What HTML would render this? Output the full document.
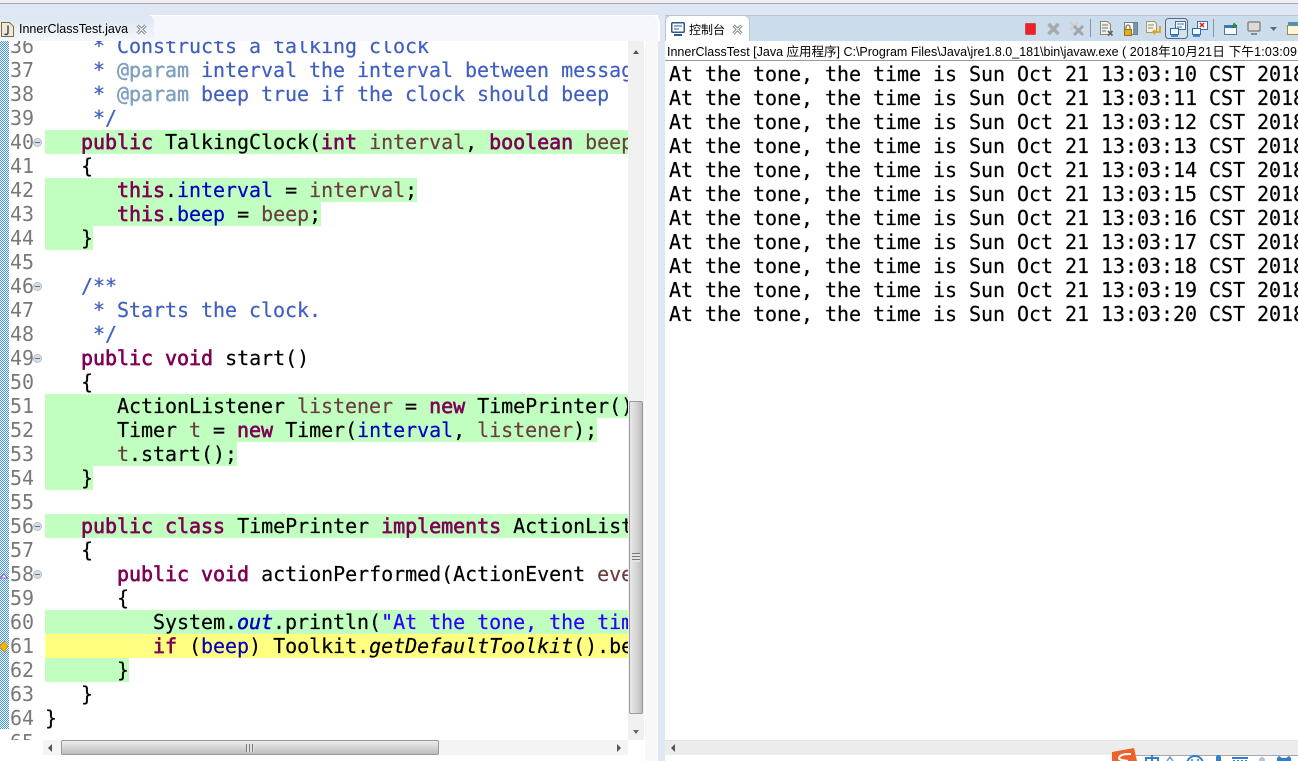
<!DOCTYPE html>
<html><head><meta charset="utf-8">
<style>
*{box-sizing:border-box}
html,body{margin:0;padding:0}
body{width:1298px;height:761px;overflow:hidden;background:#fff;position:relative;font-family:"Liberation Sans","Noto Sans CJK SC",sans-serif}
.a{position:absolute}
#code,#con{font:20px/24px "DejaVu Sans Mono","Liberation Mono",monospace;letter-spacing:-.04px;overflow:hidden;-webkit-text-stroke:.2px}
#code{left:45px;top:41px;width:583px;height:699px;color:#000;white-space:pre}
#code div{position:absolute;left:0;height:24px}
#code div.g{background:#c0ffc0}
#code div.y{background:#ffff80}
#con{left:669px;top:62px;width:629px;height:678px;color:#000}
#con div{height:24px;white-space:pre}
#nums{left:10px;top:41px;width:32px;height:699px;overflow:hidden;font:20px/24px "DejaVu Sans Mono",monospace;letter-spacing:-.04px;color:#787878;white-space:pre}
#nums div{position:absolute;left:0;height:24px}
b{color:#7f0055;font-weight:normal;-webkit-text-stroke:.65px #7f0055}
i.c{color:#3f5fbf;font-style:normal}
i.t{color:#7f9fbf;font-style:normal;-webkit-text-stroke:.4px #7f9fbf}
i.v{color:#6a3e3e;font-style:normal}
i.f{color:#0000c0;font-style:normal}
i.s{color:#2a00ff;font-style:normal}
i.o{color:#0000c0;font-style:italic;-webkit-text-stroke:.5px #0000c0}
.fold{position:absolute;left:33px;width:9px;height:9px;border-radius:50%;background:#d6dfe8;border:1px solid #b4c0cc}
.fold:after{content:"";position:absolute;left:1px;top:3px;width:5px;height:1px;background:#5f7388}
</style></head><body>
<!-- top -->
<div class="a" style="left:0;top:0;width:1298px;height:3px;background:#f0f0f0"></div>
<div class="a" style="left:0;top:3px;width:1298px;height:1px;background:#a8a8a8"></div>
<div class="a" style="left:0;top:4px;width:1298px;height:11px;background:#dfe6f4"></div>
<div class="a" style="left:645px;top:41px;width:15px;height:720px;background:#f8f8f8"></div>
<div class="a" style="left:658px;top:15px;width:7px;height:746px;background:#dfe6f4"></div>

<!-- editor tab -->
<div class="a" style="left:0;top:15px;width:660px;height:26px;background:#f5f7fc;border-top:1px solid #fff;border-right:2px solid #fff;border-top-right-radius:8px"></div>
<div class="a" style="left:0;top:15px;width:154px;height:26px;background:linear-gradient(#dbe5f2,#f4f7fb);border-top-right-radius:7px"></div>
<svg class="a" style="left:1px;top:22px" width="13" height="15" viewBox="0 0 13 15"><path d="M.5.5h8l4 4v10H.5z" fill="#f3e9cf" stroke="#7d6c4a"/><path d="M7 3.500v7c0 2-2 2.500-3.500 1.500" fill="none" stroke="#2c4a86" stroke-width="1.500"/></svg>
<div class="a" style="left:19px;top:22px;font-size:12.500px;line-height:15px;color:#000;white-space:pre">InnerClassTest.java</div>
<svg class="a" style="left:136px;top:24px" width="11" height="11" viewBox="0 0 11 11"><path d="M1.500 1.500l8 8M9.500 1.500l-8 8" stroke="#777" stroke-width="3"/><path d="M1.500 1.500l8 8M9.500 1.500l-8 8" stroke="#fff" stroke-width="1.200"/></svg>

<!-- left strip -->
<div class="a" style="left:0;top:41px;width:9px;height:688px;background:conic-gradient(#3f97f5 25%,#fff 0 50%,#3f97f5 0 75%,#fff 0) 0 0/2px 2px"></div>
<svg class="a" style="left:0;top:568px" width="8" height="12" viewBox="0 0 8 12"><path d="M.5 10L4 6l3.500 4z" fill="#fff" stroke="#8a5fc0"/></svg>
<svg class="a" style="left:0;top:640px" width="9" height="13" viewBox="0 0 9 13"><path d="M4 1l4 5.500L4 12 0 6.500z" fill="#f5b800" stroke="#c98a00" stroke-width=".7"/></svg>

<!-- line numbers -->
<div id="nums" class="a">
<div style="top:-7px">36</div><div style="top:17px">37</div><div style="top:41px">38</div><div style="top:65px">39</div><div style="top:89px">40</div><div style="top:113px">41</div><div style="top:137px">42</div><div style="top:161px">43</div><div style="top:185px">44</div><div style="top:209px">45</div><div style="top:233px">46</div><div style="top:257px">47</div><div style="top:281px">48</div><div style="top:305px">49</div><div style="top:329px">50</div><div style="top:353px">51</div><div style="top:377px">52</div><div style="top:401px">53</div><div style="top:425px">54</div><div style="top:449px">55</div><div style="top:473px">56</div><div style="top:497px">57</div><div style="top:521px">58</div><div style="top:545px">59</div><div style="top:569px">60</div><div style="top:593px">61</div><div style="top:617px">62</div><div style="top:641px">63</div><div style="top:665px">64</div><div style="top:689px">65</div>
</div>
<div class="fold" style="top:138px"></div>
<div class="fold" style="top:282px"></div>
<div class="fold" style="top:354px"></div>
<div class="fold" style="top:522px"></div>
<div class="fold" style="top:570px"></div>

<!-- code -->
<div id="code" class="a">
<div style="top:-7px"><i class="c">    * Constructs a talking clock</i></div>
<div style="top:17px"><i class="c">    * </i><i class="t">@param</i><i class="c"> interval the interval between messages</i></div>
<div style="top:41px"><i class="c">    * </i><i class="t">@param</i><i class="c"> beep true if the clock should beep</i></div>
<div style="top:65px"><i class="c">    */</i></div>
<div class="g" style="top:89px;width:583px">   <b>public</b> TalkingClock(<b>int</b> <i class="v">interval</i>, <b>boolean</b> <i class="v">beep</i>)</div>
<div style="top:113px">   {</div>
<div class="g" style="top:137px;width:372px">      <b>this</b>.<i class="f">interval</i> = <i class="v">interval</i>;</div>
<div class="g" style="top:161px;width:276px">      <b>this</b>.<i class="f">beep</i> = <i class="v">beep</i>;</div>
<div class="g" style="top:185px;width:48px">   }</div>
<div style="top:233px"><i class="c">   /**</i></div>
<div style="top:257px"><i class="c">    * Starts the clock.</i></div>
<div style="top:281px"><i class="c">    */</i></div>
<div style="top:305px">   <b>public</b> <b>void</b> start()</div>
<div style="top:329px">   {</div>
<div class="g" style="top:353px;width:583px">      ActionListener <i class="v">listener</i> = <b>new</b> TimePrinter();</div>
<div class="g" style="top:377px;width:552px">      Timer <i class="v">t</i> = <b>new</b> Timer(<i class="f">interval</i>, <i class="v">listener</i>);</div>
<div class="g" style="top:401px;width:192px">      <i class="v">t</i>.start();</div>
<div class="g" style="top:425px;width:48px">   }</div>
<div class="g" style="top:473px;width:583px">   <b>public</b> <b>class</b> TimePrinter <b>implements</b> ActionListener</div>
<div style="top:497px">   {</div>
<div style="top:521px">      <b>public</b> <b>void</b> actionPerformed(ActionEvent <i class="v">event</i>)</div>
<div style="top:545px">      {</div>
<div class="g" style="top:569px;width:583px">         System.<i class="o">out</i>.println(<i class="s">"At the tone, the time is "</i>);</div>
<div class="y" style="top:593px;width:583px">         <b>if</b> (<i class="f">beep</i>) Toolkit.<em>getDefaultToolkit</em>().beep();</div>
<div class="g" style="top:617px;width:84px">      }</div>
<div style="top:641px">   }</div>
<div style="top:665px">}</div>
</div>

<!-- editor v scrollbar -->
<div class="a" style="left:628px;top:41px;width:16px;height:699px;background:#f0f0f0"></div>
<div class="a" style="left:633px;top:50px;width:0;height:0;border-left:3px solid transparent;border-right:3px solid transparent;border-bottom:4px solid #555"></div>
<div class="a" style="left:629px;top:401px;width:14px;height:313px;border:1px solid #999;border-radius:2px;background:linear-gradient(90deg,#e8e8e8,#d8d8d8 45%,#bcbcbc)"></div>
<div class="a" style="left:632px;top:553px;width:8px;height:9px;background:repeating-linear-gradient(#777 0 1px,#e4e4e4 1px 3px)"></div>
<div class="a" style="left:633px;top:730px;width:0;height:0;border-left:3px solid transparent;border-right:3px solid transparent;border-top:4px solid #666"></div>

<!-- editor h scrollbar -->
<div class="a" style="left:0;top:740px;width:43px;height:21px;background:#fff"></div>
<div class="a" style="left:43px;top:740px;width:585px;height:15px;background:#f4f4f4"></div>
<div class="a" style="left:48px;top:744px;width:0;height:0;border-top:4px solid transparent;border-bottom:4px solid transparent;border-right:4px solid #555"></div>
<div class="a" style="left:61px;top:740px;width:378px;height:15px;border:1px solid #999;border-radius:2px;background:linear-gradient(#ececec,#d8d8d8 45%,#bcbcbc)"></div>
<div class="a" style="left:246px;top:744px;width:8px;height:8px;background:repeating-linear-gradient(90deg,#777 0 1px,#e4e4e4 1px 3px)"></div>
<div class="a" style="left:617px;top:744px;width:0;height:0;border-top:4px solid transparent;border-bottom:4px solid transparent;border-left:4px solid #555"></div>

<!-- console header -->
<div class="a" style="left:665px;top:15px;width:633px;height:26px;background:#cbdcec;border-top:1px solid #b8c6d8"></div>
<div class="a" style="left:665px;top:15px;width:85px;height:26px;background:#fff;border:1px solid #b8c6d8;border-bottom:none;border-radius:6px 6px 0 0"></div>
<svg class="a" style="left:671px;top:22px" width="14" height="14" viewBox="0 0 14 14"><rect x=".75" y=".75" width="12.500" height="9.500" rx="1" fill="#fff" stroke="#2d5a8e" stroke-width="1.500"/><path d="M3 4h8M3 7h5" stroke="#2d5a8e"/><path d="M3 13h8" stroke="#2d5a8e" stroke-width="2"/></svg>
<div class="a" style="left:689px;top:22px;font-size:12px;line-height:16px;color:#000;white-space:pre;font-family:'Noto Sans CJK SC',sans-serif">控制台</div>
<svg class="a" style="left:732px;top:24px" width="11" height="11" viewBox="0 0 11 11"><path d="M1.500 1.500l8 8M9.500 1.500l-8 8" stroke="#777" stroke-width="3"/><path d="M1.500 1.500l8 8M9.500 1.500l-8 8" stroke="#fff" stroke-width="1.200"/></svg>

<!-- toolbar icons -->
<svg class="a" style="left:1020px;top:16px" width="278" height="25" viewBox="1020 16 278 25">
<rect x="1025.500" y="23.500" width="10" height="11" rx="1" fill="#e8232d" stroke="#d44"/>
<path d="M1048.500 24l10 10M1058.500 24l-10 10" stroke="#a9a9a9" stroke-width="3.500"/>
<path d="M1070 22l8 8M1078 22l-8 8" stroke="#cfcfcf" stroke-width="2.500"/><path d="M1074 26l9 9M1083 26l-9 9" stroke="#a5a5a5" stroke-width="3"/>
<path d="M1090.500 19v18" stroke="#8a96a4"/>
<path d="M1100.500 21.500h7l3 3v10h-10z" fill="#f4f0e0" stroke="#8d8a6f"/><path d="M1102 25h6M1102 28h6M1102 31h4" stroke="#6078a0"/><path d="M1108 31l4.500 4.500M1112.500 31l-4.500 4.500" stroke="#666" stroke-width="1.800"/>
<rect x="1124.500" y="22.500" width="13" height="12" fill="#fff" stroke="#6a7f98"/><rect x="1133" y="23" width="4" height="11" fill="#7d93ad"/><rect x="1124.500" y="29.500" width="7" height="6" fill="#e2ab2a" stroke="#9a7210"/><path d="M1126 29v-2a2 2 0 0 1 4 0v2" fill="none" stroke="#8a6a20" stroke-width="1.200"/>
<path d="M1146.500 21.500h8l2 2v9h-10z" fill="#f7f2da" stroke="#a59a6a"/><path d="M1148 25h6M1148 28h5" stroke="#7088a8"/><path d="M1160 26v6h-7m2-2l-2 2 2 2" fill="none" stroke="#d9a520" stroke-width="1.800"/>
<rect x="1165.500" y="18.500" width="22" height="20" rx="3" fill="#d4e0ec" stroke="#5a6a7c"/>
<rect x="1175.500" y="21.500" width="10" height="8" fill="#fff" stroke="#3a6ea8"/><path d="M1177 24h7M1177 27h5" stroke="#3a6ea8"/><rect x="1170.500" y="28.500" width="8" height="6" fill="#fff" stroke="#1f6fc0"/><path d="M1171 36h7" stroke="#1f6fc0" stroke-width="1.500"/>
<rect x="1197.500" y="21.500" width="10" height="8" fill="#fff" stroke="#3a6ea8"/><path d="M1200 23l4 4M1204 23l-4 4" stroke="#d82020" stroke-width="1.500"/><rect x="1192.500" y="28.500" width="8" height="6" fill="#fff" stroke="#1f6fc0"/><path d="M1193 36h7" stroke="#1f6fc0" stroke-width="1.500"/>
<path d="M1213.500 19v18" stroke="#8a96a4"/>
<rect x="1224.500" y="25.500" width="12" height="9" fill="#fff" stroke="#4a7aa8"/><rect x="1225" y="25" width="11" height="3" fill="#3a7ab0"/><path d="M1232 28l2-5 3 3z" fill="#2a9a3a" stroke="#1a7a2a" stroke-width=".6"/>
<rect x="1248" y="22" width="12" height="9" rx="1" fill="#dcdcd4" stroke="#8a8a82" stroke-width="1.500"/><path d="M1251 34h6" stroke="#8a8a82" stroke-width="2"/>
<path d="M1270 27h7l-3.500 4z" fill="#666"/>
<rect x="1287.500" y="25.500" width="12" height="9" fill="#fff8d8" stroke="#a08a40"/><rect x="1288" y="22" width="10" height="3" fill="#4a90c8"/>
</svg>

<!-- description -->
<div class="a" style="left:665px;top:41px;width:633px;height:20px;background:#fff;border-bottom:1px solid #9a9a9a"></div>
<div class="a" style="left:667px;top:45px;font-size:12.500px;line-height:15px;color:#000;white-space:pre;width:631px;overflow:hidden">InnerClassTest [Java 应用程序] C:\Program Files\Java\jre1.8.0_181\bin\javaw.exe ( <span style="letter-spacing:.2px">2018年10月21日 下午1:03:09</span></div>

<!-- console --><div id="con" class="a"><div>At the tone, the time is Sun Oct 21 13:03:10 CST 2018</div><div>At the tone, the time is Sun Oct 21 13:03:11 CST 2018</div><div>At the tone, the time is Sun Oct 21 13:03:12 CST 2018</div><div>At the tone, the time is Sun Oct 21 13:03:13 CST 2018</div><div>At the tone, the time is Sun Oct 21 13:03:14 CST 2018</div><div>At the tone, the time is Sun Oct 21 13:03:15 CST 2018</div><div>At the tone, the time is Sun Oct 21 13:03:16 CST 2018</div><div>At the tone, the time is Sun Oct 21 13:03:17 CST 2018</div><div>At the tone, the time is Sun Oct 21 13:03:18 CST 2018</div><div>At the tone, the time is Sun Oct 21 13:03:19 CST 2018</div><div>At the tone, the time is Sun Oct 21 13:03:20 CST 2018</div></div>

<!-- console h scrollbar -->
<div class="a" style="left:665px;top:740px;width:633px;height:15px;background:#ececec;border-top:1px solid #e4e4e4"></div>
<div class="a" style="left:671px;top:744px;width:0;height:0;border-top:4px solid transparent;border-bottom:4px solid transparent;border-right:4px solid #555"></div>
<div class="a" style="left:665px;top:755px;width:633px;height:6px;background:#fff"></div>
<div class="a" style="left:1136px;top:755px;width:162px;height:1px;background:#a8a8a8"></div>

<!-- tray -->
<svg class="a" style="left:1105px;top:745px" width="193" height="16" viewBox="1105 745 193 16">
<path d="M1112 752l22-4 3 13h-25z" fill="#f0602a"/><path d="M1131 754c-5 0-11 0-12 4 0 2 3 2 9 3" fill="none" stroke="#fff" stroke-width="2"/>
<path d="M1146 758h12v4h-12zM1152 755v6" fill="none" stroke="#2f7fd0" stroke-width="2"/>
<path d="M1167 761l3-4 3 4" fill="none" stroke="#6a9bd0" stroke-width="1.500"/>
<circle cx="1195" cy="764" r="8" fill="none" stroke="#2f7fd0" stroke-width="2"/><circle cx="1192" cy="760" r="1" fill="#2f7fd0"/><circle cx="1198" cy="760" r="1" fill="#2f7fd0"/>
<rect x="1216" y="755" width="5" height="8" rx="2.500" fill="#2f7fd0"/>
<path d="M1232 758h16M1234 760v2M1238 760v2M1242 760v2M1246 760v2" stroke="#2f7fd0" stroke-width="2"/>
<circle cx="1262" cy="760" r="3" fill="#b4c4dc"/>
<path d="M1277 761v-3l2-2 3 2h4l3-2 2 2v3z" fill="#2f7fd0"/>
</svg>
</body></html>
